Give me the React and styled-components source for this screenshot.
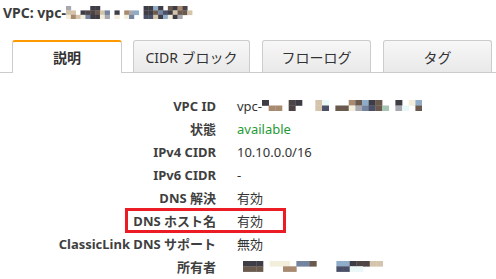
import React from "react";
import styled, { createGlobalStyle } from "styled-components";

const GlobalStyle = createGlobalStyle`
    body {
        margin: 0;
        background: #ffffff;
        font-family: "Noto Sans", "Noto Sans CJK JP", sans-serif;
        color: #444444;
    }
`

const palette = {
    d: '#3e3d46',
    k: '#4d4446',
    b: '#6a5a4e',
    t: '#a88a70',
    s: '#d4c4ac',
    l: '#f3eedb',
    c: '#eaf8f8',
    u: '#8fadc8',
    n: '#4a5068',
    p: '#74849e',
    g: '#a8a8b0',
    m: '#a8c4b4',
};

// masked ids, one string per column, top row first
const headerCols = ['gsl', '.st', '..s', '.dl', '.kp', 'dkd', 'dbd', '.sl', '.pg', '...', '.dl', '...', '.tl', '.gp', '.u.', '...', 'ddn', 'ddn', 'ubs', 'dpd', '.nu', 'bdl', 'dsd', 'tbg', 'kb.', '.s.', '...'];
const vpcCols = ['d.', '.t', '.t', '..', 'kk', 'd.', '..', '..', 'ss', 'cn', '..', '.b', '.b', 'tl', 'bg', 'up', 'dn', 'bb', '.m', '..', 'dg', '.c', 'l.', 'ub'];
const ownerCols = ['db', 'db', 'db', '..', 'l.', 'l.', 'lt', '.t', 'p.', 'p.', 'b.', '..', '..', '..', 'un', 'un', 'dc', 'kc', 'k.', 's.', 's.'];

const Mosaic = ({ cols, cw, ch }) => (
    <svg width={cols.length * cw} height={cols[0].length * ch}>
        {cols.map((col, i) => col.split('').map((key, j) => (
            palette[key] ? <rect key={i + '-' + j} x={i * cw} y={j * ch} width={cw + 0.3} height={ch + 0.3} fill={palette[key]} /> : null
        )))}
    </svg>
);

const Page = styled.div`
    width: 496px;
    height: 279px;
    overflow: hidden;
`

const Header = styled.h1`
    margin: 0;
    height: 24px;
    padding: 0 0 0 3px;
    display: flex;
    align-items: center;
    font-size: 14px;
    font-weight: 700;
    color: #3c3c3c;

    svg {
        margin: 1px 0 0 0;
    }
`

const TabBar = styled.div`
    margin: 16px 0 0 0;
    padding: 0 0 0 12px;
    height: 32px;
    display: flex;
    align-items: flex-end;
    border-bottom: 1px solid #cccccc;
`

const Tab = styled.div`
    box-sizing: border-box;
    width: ${props => props.$w}px;
    margin: 0 ${props => props.$gap}px 0 0;
    height: ${props => props.$active ? 33 : 32}px;
    margin-bottom: ${props => props.$active ? -1 : 0}px;
    display: flex;
    align-items: center;
    justify-content: center;
    font-size: 14px;
    font-weight: ${props => props.$active ? 700 : 400};
    color: #333333;
    border: 1px solid #cccccc;
    border-bottom: none;
    border-radius: 3px 3px 0 0;
    border-top: ${props => props.$active ? '2px solid #ff9900' : '1px solid #cccccc'};
    background: ${props => props.$active ? '#ffffff' : 'linear-gradient(#f7f7f7, #e9e9e9)'};
    padding-bottom: ${props => props.$active ? 2 : 0}px;
`

const Details = styled.div`
    padding: 21px 0 0 0;
    display: flex;
    flex-direction: column;
`

const Row = styled.div`
    position: relative;
    height: 23px;
    display: flex;
    align-items: center;
    font-size: 13px;
`

const Label = styled.div`
    width: 216px;
    text-align: right;
    font-weight: 700;
    color: #3f3f3f;
    white-space: nowrap;
`

const Value = styled.div`
    margin: 0 0 0 21px;
    display: flex;
    align-items: center;
    color: ${props => props.$ok ? '#1f9a36' : '#333333'};
    white-space: nowrap;
`

const Highlight = styled.div`
    position: absolute;
    left: 125px;
    top: -1px;
    width: 161px;
    height: 25px;
    box-sizing: border-box;
    border: 3px solid #ec1c24;
`

const rows = [
    { label: 'VPC ID', value: 'vpc-', mask: vpcCols },
    { label: '状態', value: 'available', ok: true },
    { label: 'IPv4 CIDR', value: '10.10.0.0/16' },
    { label: 'IPv6 CIDR', value: '-' },
    { label: 'DNS 解決', value: '有効' },
    { label: 'DNS ホスト名', value: '有効', marked: true },
    { label: 'ClassicLink DNS サポート', value: '無効' },
    { label: '所有者', value: '', owner: true },
];

const App = () => {
    return (
        <Page>
            <GlobalStyle />
            <Header>
                VPC: vpc-
                <Mosaic cols={headerCols} cw={4.85} ch={4.4} />
            </Header>
            <TabBar>
                <Tab $active $w={110} $gap={11}>説明</Tab>
                <Tab $w={117} $gap={12}>CIDR ブロック</Tab>
                <Tab $w={109} $gap={12}>フローログ</Tab>
                <Tab $w={109} $gap={0}>タグ</Tab>
            </TabBar>
            <Details>
                {rows.map(row => (
                    <Row key={row.label}>
                        {row.marked && <Highlight />}
                        <Label>{row.label}</Label>
                        <Value $ok={row.ok}>
                            {row.value}
                            {row.mask && <Mosaic cols={row.mask} cw={6.67} ch={5.5} />}
                            {row.owner && <span style={{ marginLeft: 6 }}><Mosaic cols={ownerCols} cw={6.67} ch={5.3} /></span>}
                        </Value>
                    </Row>
                ))}
            </Details>
        </Page>
    );
};

export default App;
